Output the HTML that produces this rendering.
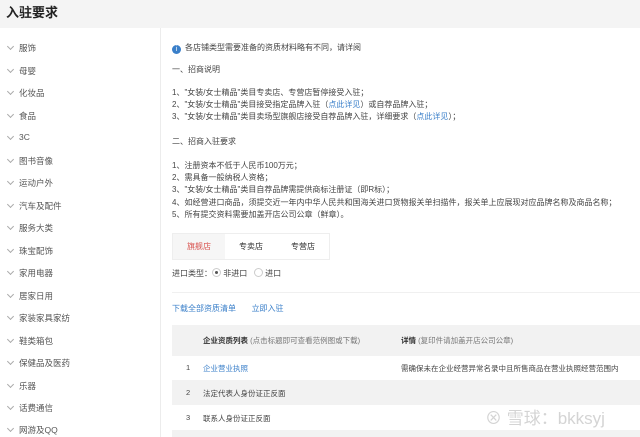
<html><head><style>
body{margin:0;width:640px;height:437px;overflow:hidden;background:#fff;font-family:"Liberation Sans","Noto Sans CJK SC",sans-serif;color:#333;font-size:8px;position:relative}
.hd{position:absolute;left:0;top:0;width:640px;height:28px;background:#f4f4f4;font-size:13px;font-weight:bold;line-height:26px;text-indent:6px;color:#222}
.sb{position:absolute;left:0;top:28px;width:160px;height:409px;border-right:1px solid #ececec}
.sb div{position:absolute;left:19px;font-size:8.5px;color:#555}
.sb div:before{content:"";position:absolute;left:-11px;top:2px;width:4px;height:4px;border-right:1px solid #aaa;border-bottom:1px solid #aaa;transform:rotate(45deg)}
.t{position:absolute;left:172px;white-space:nowrap;font-size:8px;color:#444}
a{color:#3a7fc9;text-decoration:none}
.tabs{position:absolute;left:172px;top:233px;height:25px;border:1px solid #eee;display:flex}
.tabs span{width:52px;text-align:center;line-height:25px;font-size:8px}
.row{position:absolute;left:172px;width:468px;font-size:7.5px;color:#444}
</style></head><body>
<div class="hd">入驻要求</div>
<div class="sb">
<div style="top:14px">服饰</div><div style="top:37px">母婴</div><div style="top:59px">化妆品</div><div style="top:82px">食品</div><div style="top:104px">3C</div><div style="top:127px">图书音像</div><div style="top:149px">运动户外</div><div style="top:172px">汽车及配件</div><div style="top:194px">服务大类</div><div style="top:217px">珠宝配饰</div><div style="top:239px">家用电器</div><div style="top:262px">居家日用</div><div style="top:284px">家装家具家纺</div><div style="top:307px">鞋类箱包</div><div style="top:329px">保健品及医药</div><div style="top:352px">乐器</div><div style="top:374px">话费通信</div><div style="top:396px">网游及QQ</div>
</div>
<div class="t" style="top:42px"><span style="display:inline-block;width:9px;height:9px;border-radius:50%;background:#3a7fc9;color:#fff;font-size:7px;text-align:center;line-height:9px;margin-right:4px;vertical-align:-1px">i</span>各店铺类型需要准备的资质材料略有不同，请详阅</div>
<div class="t" style="top:64px">一、招商说明</div>
<div class="t" style="top:87px">1、"女装/女士精品"类目专卖店、专营店暂停接受入驻；</div>
<div class="t" style="top:99px">2、"女装/女士精品"类目接受指定品牌入驻（<a>点此详见</a>）或自荐品牌入驻；</div>
<div class="t" style="top:111px">3、"女装/女士精品"类目卖场型旗舰店接受自荐品牌入驻，详细要求（<a>点此详见</a>）；</div>
<div class="t" style="top:136px">二、招商入驻要求</div>
<div class="t" style="top:160px">1、注册资本不低于人民币100万元；</div>
<div class="t" style="top:172px">2、需具备一般纳税人资格；</div>
<div class="t" style="top:184px">3、"女装/女士精品"类目自荐品牌需提供商标注册证（即R标）；</div>
<div class="t" style="top:197px">4、如经营进口商品，须提交近一年内中华人民共和国海关进口货物报关单扫描件，报关单上应展现对应品牌名称及商品名称；</div>
<div class="t" style="top:209px">5、所有提交资料需要加盖开店公司公章（鲜章）。</div>
<div class="tabs"><span style="background:#f6f6f6;color:#d9534f">旗舰店</span><span>专卖店</span><span>专营店</span></div>
<div class="t" style="top:268px">进口类型：<span style="display:inline-block;width:7px;height:7px;border:1px solid #ccc;border-radius:50%;vertical-align:-1px;position:relative"><span style="position:absolute;left:2px;top:2px;width:3px;height:3px;background:#555;border-radius:50%"></span></span> 非进口 &nbsp; <span style="display:inline-block;width:7px;height:7px;border:1px solid #ccc;border-radius:50%;vertical-align:-1px"></span> 进口</div>
<div style="position:absolute;left:172px;top:292px;width:468px;height:1px;background:#f0f0f0"></div>
<div class="t" style="top:303px"><a>下载全部资质清单</a> &nbsp; &nbsp; &nbsp; <a>立即入驻</a></div>
<div class="row" style="top:325px;height:31px;background:#f2f2f2"><span style="position:absolute;left:31px;top:10px;font-weight:bold;color:#333">企业资质列表 <span style="font-weight:normal;color:#777">(点击标题即可查看范例图或下载)</span></span><span style="position:absolute;left:229px;top:10px;font-weight:bold;color:#333">详情 <span style="font-weight:normal;color:#777">(复印件请加盖开店公司公章)</span></span></div>
<div class="row" style="top:356px;height:24px"><span style="position:absolute;left:14px;top:7px">1</span><span style="position:absolute;left:31px;top:7px"><a>企业营业执照</a></span><span style="position:absolute;left:229px;top:7px">需确保未在企业经营异常名录中且所售商品在营业执照经营范围内</span></div>
<div class="row" style="top:380px;height:25px;background:#f2f2f2"><span style="position:absolute;left:14px;top:8px">2</span><span style="position:absolute;left:31px;top:8px">法定代表人身份证正反面</span></div>
<div class="row" style="top:405px;height:25px"><span style="position:absolute;left:14px;top:8px">3</span><span style="position:absolute;left:31px;top:8px">联系人身份证正反面</span></div>
<div class="row" style="top:430px;height:7px;background:#f2f2f2"></div>
<div style="position:absolute;left:485px;top:404px;font-size:17px;color:#d4d4d4;white-space:nowrap">⊗ 雪球：bkksyj</div>
</body></html>
